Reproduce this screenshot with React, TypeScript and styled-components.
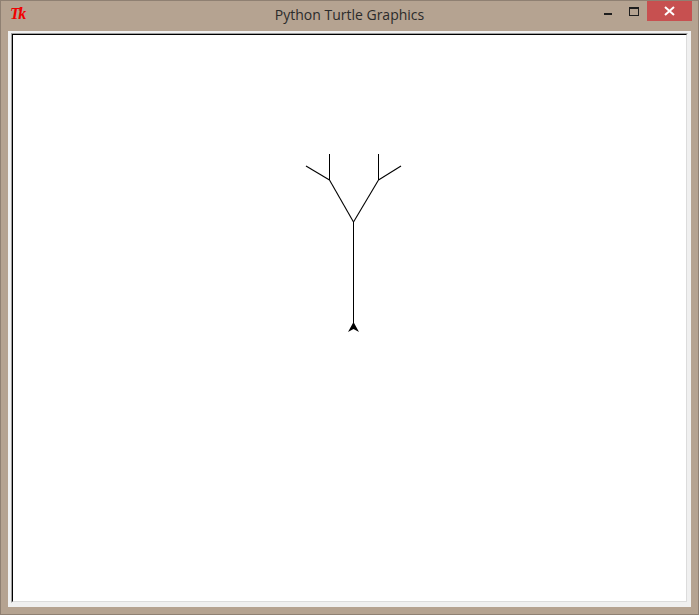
import React from "react";
import styled, { createGlobalStyle } from "styled-components";

const Global = createGlobalStyle`
  html, body { margin: 0; padding: 0; background: #ffffff; }
  body { width: 699px; height: 615px; overflow: hidden; }
`;

const Window = styled.div`
  box-sizing: border-box;
  width: 699px;
  height: 615px;
  background: #b5a391;
  border: 1px solid #8f8072;
  display: flex;
  flex-direction: column;
`;

const TitleBar = styled.div`
  height: 30px;
  display: grid;
  grid-template-columns: 1fr auto 1fr;
  align-items: start;
  font-family: "Open Sans", "Noto Sans", sans-serif;
`;

const AppIcon = styled.div`
  justify-self: start;
  padding-left: 9px;
  padding-top: 5px;
  font-family: "Liberation Serif", serif;
  font-style: italic;
  font-weight: bold;
  font-size: 16px;
  letter-spacing: -1.5px;
  color: #f00000;
  line-height: 16px;
`;

const Title = styled.div`
  font-size: 14px;
  line-height: 30px;
  margin-top: -1px;
  color: #2b2b2b;
  white-space: nowrap;
`;

const Controls = styled.div`
  justify-self: end;
  display: flex;
  align-items: flex-start;
  padding-right: 6px;
`;

const CtrlButton = styled.div<{ $w: number; $danger?: boolean }>`
  width: ${(p) => p.$w}px;
  height: 20px;
  display: flex;
  align-items: flex-start;
  justify-content: center;
  background: ${(p) => (p.$danger ? "#c75050" : "transparent")};
`;

const MinBar = styled.div`
  width: 8px;
  height: 2px;
  background: #1e1e1e;
  margin-top: 12px;
`;

const MaxBox = styled.div`
  box-sizing: border-box;
  width: 10px;
  height: 9px;
  border: 1px solid #1e1e1e;
  border-top-width: 2px;
  margin-top: 6px;
`;

const CloseGlyph = styled.svg`
  margin-top: 5px;
`;

const Client = styled.div`
  flex: 1;
  margin: 0 7px 7px 7px;
  background: #f0f0f0;
  padding: 2px 3px 4px 3px;
  display: flex;
`;

const SunkenOuter = styled.div`
  flex: 1;
  display: flex;
  border-style: solid;
  border-width: 1px;
  border-color: #a0a0a0 #f0f0f0 #f0f0f0 #a0a0a0;
`;

const SunkenInner = styled.div`
  flex: 1;
  display: flex;
  border-style: solid;
  border-width: 1px;
  border-color: #000000 #dcdcdc #dcdcdc #000000;
  background: #ffffff;
`;

const Drawing = styled.svg`
  display: block;
  width: 100%;
  height: 100%;
`;

export default function App() {
  return (
    <>
      <Global />
      <Window>
        <TitleBar>
          <AppIcon>Tk</AppIcon>
          <Title>Python Turtle Graphics</Title>
          <Controls>
            <CtrlButton $w={26}>
              <MinBar />
            </CtrlButton>
            <CtrlButton $w={26}>
              <MaxBox />
            </CtrlButton>
            <CtrlButton $w={45} $danger>
              <CloseGlyph width="11" height="10" viewBox="0 0 11 10">
                <path d="M1 1 L10 9 M10 1 L1 9" stroke="#ffffff" strokeWidth="2" />
              </CloseGlyph>
            </CtrlButton>
          </Controls>
        </TitleBar>
        <Client>
          <SunkenOuter>
            <SunkenInner>
              <Drawing viewBox="13 35 673 566" preserveAspectRatio="xMinYMin meet">
                <g stroke="#000" strokeWidth="1" fill="none" shapeRendering="crispEdges">
                  <line x1="353.5" y1="222" x2="353.5" y2="324" />
                  <line x1="329.5" y1="154" x2="329.5" y2="180" />
                  <line x1="378.5" y1="154" x2="378.5" y2="180" />
                </g>
                <g stroke="#000" strokeWidth="1.1" fill="none">
                  <line x1="353.5" y1="222" x2="329.5" y2="180" />
                  <line x1="353.5" y1="222" x2="378.5" y2="180" />
                  <line x1="329.5" y1="180" x2="306" y2="166" />
                  <line x1="378.5" y1="180" x2="401" y2="166" />
                </g>
                <polygon points="353.5,322 348,332 353.5,329 359,332" fill="#000" />
              </Drawing>
            </SunkenInner>
          </SunkenOuter>
        </Client>
      </Window>
    </>
  );
}
